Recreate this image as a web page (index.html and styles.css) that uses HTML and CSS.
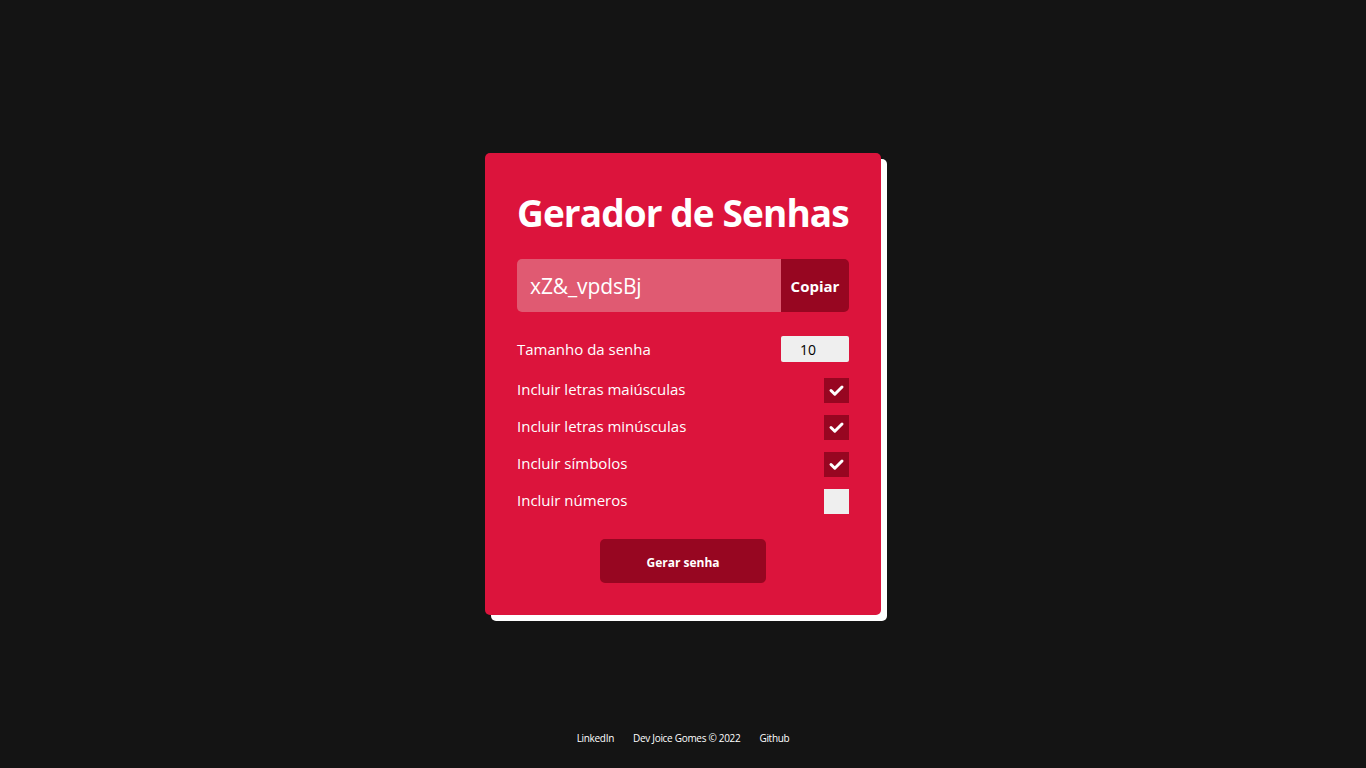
FILE: index.html
```html
<!DOCTYPE html>
<html lang="pt-BR">
<head>
<meta charset="utf-8">
<title>Gerador de Senhas</title>
<link rel="stylesheet" href="styles.css">
</head>
<body>
<div class="page">
  <main class="card">
    <h1 class="title">Gerador de Senhas</h1>
    <div class="result">
      <div class="result-text">xZ&amp;_vpdsBj</div>
      <button class="copy-btn" type="button">Copiar</button>
    </div>
    <div class="options">
      <div class="row row-size">
        <span class="label">Tamanho da senha</span>
        <span class="size-input">10</span>
      </div>
      <div class="row">
        <span class="label">Incluir letras maiúsculas</span>
        <span class="check checked"><svg viewBox="0 0 25 25" width="25" height="25"><polyline points="7,12.5 10.8,16.2 18,9" fill="none" stroke="#fff" stroke-width="3" stroke-linecap="round" stroke-linejoin="round"/></svg></span>
      </div>
      <div class="row">
        <span class="label">Incluir letras minúsculas</span>
        <span class="check checked"><svg viewBox="0 0 25 25" width="25" height="25"><polyline points="7,12.5 10.8,16.2 18,9" fill="none" stroke="#fff" stroke-width="3" stroke-linecap="round" stroke-linejoin="round"/></svg></span>
      </div>
      <div class="row">
        <span class="label">Incluir símbolos</span>
        <span class="check checked"><svg viewBox="0 0 25 25" width="25" height="25"><polyline points="7,12.5 10.8,16.2 18,9" fill="none" stroke="#fff" stroke-width="3" stroke-linecap="round" stroke-linejoin="round"/></svg></span>
      </div>
      <div class="row">
        <span class="label">Incluir números</span>
        <span class="check"></span>
      </div>
    </div>
    <button class="generate-btn" type="button">Gerar senha</button>
  </main>
  <footer class="footer">
    <a class="footer-link" href="#">LinkedIn</a>
    <span class="footer-text">Dev Joice Gomes © 2022</span>
    <a class="footer-link" href="#">Github</a>
  </footer>
</div>
</body>
</html>
```

FILE: styles.css
```css
* { box-sizing: border-box; }

html, body {
  margin: 0;
  padding: 0;
}

body {
  background: #141414;
  color: #fff;
  font-family: "Open Sans", "Noto Sans", sans-serif;
}

.page {
  height: 100vh;
  display: grid;
  grid-template-rows: 1fr auto 1fr;
  justify-items: center;
}

.card {
  grid-row: 2;
  width: 396px;
  background: #dc143c;
  border-radius: 5px;
  padding: 32px;
  box-shadow: 6px 6px 0 #fff;
  display: flex;
  flex-direction: column;
}

.title {
  margin: 6px 0 0;
  font-size: 37px;
  line-height: 44px;
  font-weight: 700;
  letter-spacing: -0.9px;
  white-space: nowrap;
}

.result {
  margin-top: 24px;
  height: 53px;
  display: flex;
  border-radius: 5px;
  overflow: hidden;
}

.result-text {
  flex: 1;
  background: #e05a72;
  display: flex;
  align-items: center;
  padding-left: 13px;
  font-size: 21px;
  letter-spacing: -0.1px;
}

.copy-btn {
  width: 68px;
  border: 0;
  background: #970621;
  color: #fff;
  font-family: inherit;
  font-size: 15px;
  font-weight: 700;
  padding: 0;
}

.options {
  margin-top: 24px;
  display: flex;
  flex-direction: column;
  gap: 12px;
}

.row {
  display: flex;
  align-items: center;
  justify-content: space-between;
  height: 25px;
}

.row-size {
  height: 26px;
  margin-bottom: 4px;
}

.label {
  font-size: 15px;
  padding-bottom: 3px;
}

.row-size .label {
  padding-bottom: 0;
}

.size-input {
  width: 68px;
  height: 26px;
  background: #efefef;
  border-radius: 2px;
  color: #000;
  font-size: 14px;
  display: flex;
  align-items: center;
  padding-left: 19px;
}

.check {
  width: 25px;
  height: 25px;
  background: #efefef;
  display: block;
}

.check.checked {
  background: #970621;
}

.check svg {
  display: block;
}

.generate-btn {
  align-self: center;
  margin-top: 25px;
  width: 166px;
  height: 44px;
  border: 0;
  border-radius: 5px;
  background: #970621;
  color: #fff;
  font-family: inherit;
  font-size: 12px;
  font-weight: 700;
  padding: 2px 0 0;
}

.footer {
  grid-row: 3;
  align-self: end;
  display: flex;
  gap: 19px;
  padding-bottom: 23px;
  font-size: 10px;
  line-height: 14px;
  letter-spacing: -0.3px;
}

.footer-link,
.footer-text {
  color: #fff;
  text-decoration: none;
}
```
